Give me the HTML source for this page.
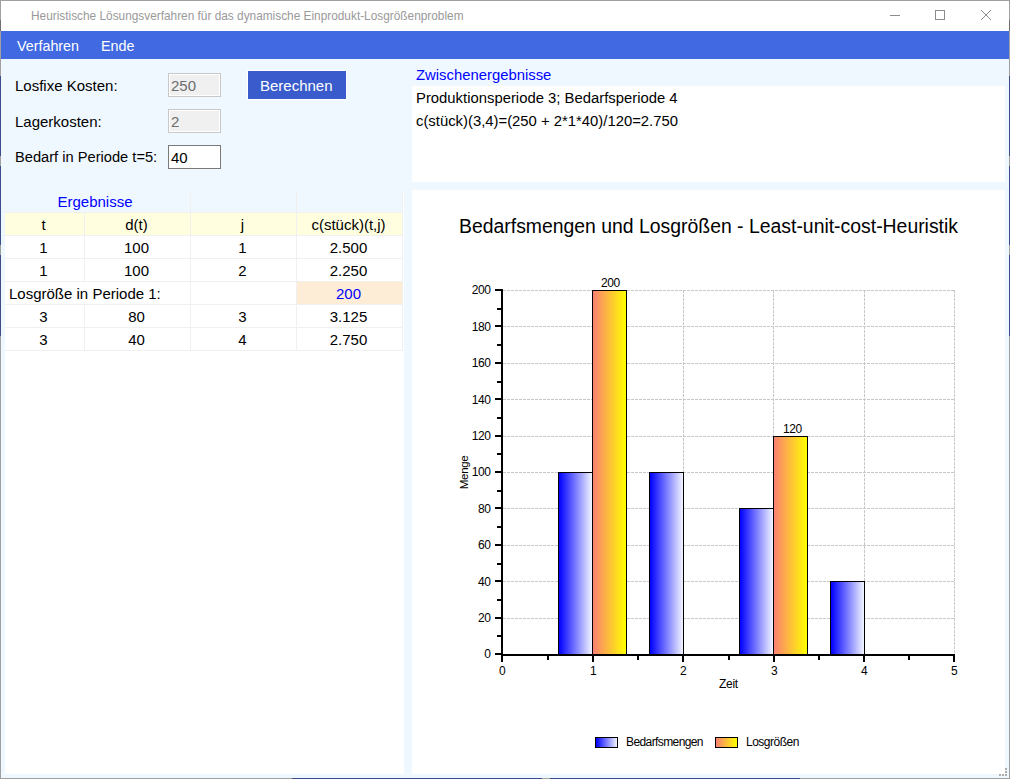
<!DOCTYPE html>
<html><head><meta charset="utf-8">
<style>
html,body{margin:0;padding:0;}
body{width:1010px;height:779px;position:relative;overflow:hidden;background:#F0F8FF;font-family:"Liberation Sans",sans-serif;}
.a{position:absolute;}
.t{position:absolute;white-space:pre;line-height:1;}
.lbl{font-size:15px;color:#000;}
.tb{position:absolute;box-sizing:border-box;background:#F0F0F0;border:1px solid #C9C9C9;box-shadow:inset 0 0 0 1px #fff;width:53px;height:24px;}
.c{position:absolute;white-space:pre;line-height:1;font-size:15px;text-align:center;}
</style></head><body>

<div class="a" style="left:0;top:0;width:1010px;height:1px;background:#A0A0A0"></div>
<div class="a" style="left:0;top:778px;width:1010px;height:1px;background:#A0A0A0"></div>
<div class="a" style="left:292px;top:778px;width:250px;height:1px;background:#3D4C8C"></div>
<div class="a" style="left:550px;top:778px;width:250px;height:1px;background:#3D4C8C"></div>
<div class="a" style="left:0px;top:0;width:1px;height:779px;background:#A0A0A0"></div>
<div class="a" style="left:0px;top:20px;width:1px;height:11px;background:#707070"></div>
<div class="a" style="left:0px;top:76px;width:1px;height:80px;background:#3D4C8C"></div>
<div class="a" style="left:0px;top:166px;width:1px;height:79px;background:#3D4C8C"></div>
<div class="a" style="left:0px;top:255px;width:1px;height:81px;background:#3D4C8C"></div>
<div class="a" style="left:1009px;top:0;width:1px;height:779px;background:#A0A0A0"></div>
<div class="a" style="left:1009px;top:20px;width:1px;height:11px;background:#707070"></div>
<div class="a" style="left:1009px;top:76px;width:1px;height:80px;background:#3D4C8C"></div>
<div class="a" style="left:1009px;top:166px;width:1px;height:79px;background:#3D4C8C"></div>
<div class="a" style="left:1009px;top:255px;width:1px;height:81px;background:#3D4C8C"></div>
<div class="a" style="left:1px;top:1px;width:1008px;height:30px;background:#fff"></div>
<div class="t" style="left:31px;top:11px;font-size:11.85px;color:#999999">Heuristische Lösungsverfahren für das dynamische Einprodukt-Losgrößenproblem</div>
<div class="a" style="left:890px;top:15px;width:10px;height:1px;background:#8C8C8C"></div>
<div class="a" style="left:935px;top:10px;width:8px;height:8px;border:1px solid #8C8C8C"></div>
<svg class="a" style="left:980px;top:9px" width="12" height="12" viewBox="0 0 12 12"><path d="M1 1 L11 11 M11 1 L1 11" stroke="#8C8C8C" stroke-width="1" fill="none"/></svg>
<div class="a" style="left:1px;top:31px;width:1008px;height:28px;background:#4169E1"></div>
<div class="t" style="left:17px;top:39px;font-size:14.3px;color:#fff">Verfahren</div>
<div class="t" style="left:101px;top:39px;font-size:14.3px;color:#fff">Ende</div>
<div class="t lbl" style="left:15px;top:78px">Losfixe Kosten:</div>
<div class="t lbl" style="left:15px;top:114px">Lagerkosten:</div>
<div class="t lbl" style="left:15px;top:150px;font-size:14.67px">Bedarf in Periode t=5:</div>
<div class="tb" style="left:168px;top:73px"></div>
<div class="tb" style="left:168px;top:109px"></div>
<div class="tb" style="left:168px;top:145px;background:#fff;border-color:#7A7A7A;box-shadow:none"></div>
<div class="t lbl" style="left:171px;top:78px;color:#6D6D6D">250</div>
<div class="t lbl" style="left:171px;top:114px;color:#6D6D6D">2</div>
<div class="t lbl" style="left:171px;top:150px">40</div>
<div class="a" style="left:247px;top:70px;width:98px;height:28px;background:#3A5BCB;border:1px solid #fff"></div>
<div class="t lbl" style="left:260px;top:78px;color:#fff">Berechnen</div>
<div class="t lbl" style="left:416px;top:68px;color:#0000FF;font-size:14.85px">Zwischenergebnisse</div>
<div class="a" style="left:412px;top:86px;width:593px;height:96px;background:#fff"></div>
<div class="t lbl" style="left:416px;top:91px;font-size:14.85px">Produktionsperiode 3; Bedarfsperiode 4</div>
<div class="t lbl" style="left:416px;top:114px;font-size:14.85px">c(stück)(3,4)=(250 + 2*1*40)/120=2.750</div>
<div class="a" style="left:5px;top:190px;width:399px;height:584px;background:#fff"></div>
<div class="a" style="left:5px;top:190px;width:397px;height:22px;background:#F0F8FF"></div>
<div class="a" style="left:5px;top:212px;width:398px;height:1px;background:#F0F0F0"></div>
<div class="a" style="left:5px;top:213px;width:397px;height:22px;background:#FFFFE0"></div>
<div class="a" style="left:5px;top:235px;width:398px;height:1px;background:#F0F0F0"></div>
<div class="a" style="left:5px;top:236px;width:397px;height:22px;background:#fff"></div>
<div class="a" style="left:5px;top:258px;width:398px;height:1px;background:#F0F0F0"></div>
<div class="a" style="left:5px;top:259px;width:397px;height:22px;background:#fff"></div>
<div class="a" style="left:5px;top:281px;width:398px;height:1px;background:#F0F0F0"></div>
<div class="a" style="left:5px;top:282px;width:397px;height:22px;background:#fff"></div>
<div class="a" style="left:5px;top:304px;width:398px;height:1px;background:#F0F0F0"></div>
<div class="a" style="left:5px;top:305px;width:397px;height:22px;background:#fff"></div>
<div class="a" style="left:5px;top:327px;width:398px;height:1px;background:#F0F0F0"></div>
<div class="a" style="left:5px;top:328px;width:397px;height:22px;background:#fff"></div>
<div class="a" style="left:5px;top:350px;width:398px;height:1px;background:#F0F0F0"></div>
<div class="a" style="left:297px;top:282px;width:105px;height:22px;background:#FEEDD6"></div>
<div class="a" style="left:190px;top:190px;width:1px;height:161px;background:#F0F0F0"></div>
<div class="a" style="left:296px;top:190px;width:1px;height:161px;background:#F0F0F0"></div>
<div class="a" style="left:402px;top:190px;width:1px;height:161px;background:#F0F0F0"></div>
<div class="a" style="left:84px;top:213px;width:1px;height:23px;background:#F0F0F0"></div>
<div class="a" style="left:84px;top:236px;width:1px;height:23px;background:#F0F0F0"></div>
<div class="a" style="left:84px;top:259px;width:1px;height:23px;background:#F0F0F0"></div>
<div class="a" style="left:84px;top:305px;width:1px;height:23px;background:#F0F0F0"></div>
<div class="a" style="left:84px;top:328px;width:1px;height:23px;background:#F0F0F0"></div>
<div class="c" style="left:3px;top:194px;width:184px;color:#0000FF">Ergebnisse</div>
<div class="c" style="left:4px;top:217px;width:79px;color:#000">t</div>
<div class="c" style="left:84px;top:217px;width:105px;color:#000">d(t)</div>
<div class="c" style="left:190px;top:217px;width:105px;color:#000">j</div>
<div class="c" style="left:296px;top:217px;width:105px;color:#000">c(stück)(t,j)</div>
<div class="c" style="left:4px;top:240px;width:79px;color:#000">1</div>
<div class="c" style="left:84px;top:240px;width:105px;color:#000">100</div>
<div class="c" style="left:190px;top:240px;width:105px;color:#000">1</div>
<div class="c" style="left:296px;top:240px;width:105px;color:#000">2.500</div>
<div class="c" style="left:4px;top:263px;width:79px;color:#000">1</div>
<div class="c" style="left:84px;top:263px;width:105px;color:#000">100</div>
<div class="c" style="left:190px;top:263px;width:105px;color:#000">2</div>
<div class="c" style="left:296px;top:263px;width:105px;color:#000">2.250</div>
<div class="t lbl" style="left:9px;top:286px;color:#000">Losgröße in Periode 1:</div>
<div class="c" style="left:296px;top:286px;width:105px;color:#0000FF">200</div>
<div class="c" style="left:4px;top:309px;width:79px;color:#000">3</div>
<div class="c" style="left:84px;top:309px;width:105px;color:#000">80</div>
<div class="c" style="left:190px;top:309px;width:105px;color:#000">3</div>
<div class="c" style="left:296px;top:309px;width:105px;color:#000">3.125</div>
<div class="c" style="left:4px;top:332px;width:79px;color:#000">3</div>
<div class="c" style="left:84px;top:332px;width:105px;color:#000">40</div>
<div class="c" style="left:190px;top:332px;width:105px;color:#000">4</div>
<div class="c" style="left:296px;top:332px;width:105px;color:#000">2.750</div>
<div class="a" style="left:412px;top:190px;width:593px;height:584px;background:#fff"></div>
<div class="t" style="left:459px;top:217px;font-size:19.4px;color:#000">Bedarfsmengen und Losgrößen - Least-unit-cost-Heuristik</div>
<svg class="a" style="left:0;top:0" width="1010" height="779" viewBox="0 0 1010 779" shape-rendering="crispEdges"><defs><linearGradient id="gb" x1="0" y1="0" x2="1" y2="0"><stop offset="0" stop-color="#0000FF"/><stop offset="1" stop-color="#F2F5FF"/></linearGradient><linearGradient id="go" x1="0" y1="0" x2="1" y2="0"><stop offset="0" stop-color="#FA8072"/><stop offset="1" stop-color="#FFFF00"/></linearGradient></defs><line x1="503" y1="618.5" x2="955" y2="618.5" stroke="#C8C8C8" stroke-width="1" stroke-dasharray="3 1"/><line x1="503" y1="581.5" x2="955" y2="581.5" stroke="#C8C8C8" stroke-width="1" stroke-dasharray="3 1"/><line x1="503" y1="545.5" x2="955" y2="545.5" stroke="#C8C8C8" stroke-width="1" stroke-dasharray="3 1"/><line x1="503" y1="508.5" x2="955" y2="508.5" stroke="#C8C8C8" stroke-width="1" stroke-dasharray="3 1"/><line x1="503" y1="472.5" x2="955" y2="472.5" stroke="#C8C8C8" stroke-width="1" stroke-dasharray="3 1"/><line x1="503" y1="436.5" x2="955" y2="436.5" stroke="#C8C8C8" stroke-width="1" stroke-dasharray="3 1"/><line x1="503" y1="399.5" x2="955" y2="399.5" stroke="#C8C8C8" stroke-width="1" stroke-dasharray="3 1"/><line x1="503" y1="363.5" x2="955" y2="363.5" stroke="#C8C8C8" stroke-width="1" stroke-dasharray="3 1"/><line x1="503" y1="326.5" x2="955" y2="326.5" stroke="#C8C8C8" stroke-width="1" stroke-dasharray="3 1"/><line x1="503" y1="290.5" x2="955" y2="290.5" stroke="#C8C8C8" stroke-width="1" stroke-dasharray="3 1"/><line x1="592.5" y1="290" x2="592.5" y2="654" stroke="#C8C8C8" stroke-width="1" stroke-dasharray="3 1"/><line x1="683.5" y1="290" x2="683.5" y2="654" stroke="#C8C8C8" stroke-width="1" stroke-dasharray="3 1"/><line x1="773.5" y1="290" x2="773.5" y2="654" stroke="#C8C8C8" stroke-width="1" stroke-dasharray="3 1"/><line x1="864.5" y1="290" x2="864.5" y2="654" stroke="#C8C8C8" stroke-width="1" stroke-dasharray="3 1"/><line x1="954.5" y1="290" x2="954.5" y2="654" stroke="#C8C8C8" stroke-width="1" stroke-dasharray="3 1"/><rect x="558" y="472" width="35" height="182" fill="#000"/><rect x="559" y="473" width="33" height="181" fill="url(#gb)"/><rect x="592" y="290" width="35" height="364" fill="#000"/><rect x="593" y="291" width="33" height="363" fill="url(#go)"/><rect x="649" y="472" width="35" height="182" fill="#000"/><rect x="650" y="473" width="33" height="181" fill="url(#gb)"/><rect x="739" y="508" width="35" height="146" fill="#000"/><rect x="740" y="509" width="33" height="145" fill="url(#gb)"/><rect x="773" y="436" width="35" height="218" fill="#000"/><rect x="774" y="437" width="33" height="217" fill="url(#go)"/><rect x="830" y="581" width="35" height="73" fill="#000"/><rect x="831" y="582" width="33" height="72" fill="url(#gb)"/><rect x="501" y="289" width="2" height="367" fill="#000"/><rect x="501" y="654" width="454" height="2" fill="#000"/><rect x="495" y="653" width="6" height="2" fill="#000"/><rect x="495" y="617" width="6" height="2" fill="#000"/><rect x="495" y="580" width="6" height="2" fill="#000"/><rect x="495" y="544" width="6" height="2" fill="#000"/><rect x="495" y="507" width="6" height="2" fill="#000"/><rect x="495" y="471" width="6" height="2" fill="#000"/><rect x="495" y="435" width="6" height="2" fill="#000"/><rect x="495" y="398" width="6" height="2" fill="#000"/><rect x="495" y="362" width="6" height="2" fill="#000"/><rect x="495" y="325" width="6" height="2" fill="#000"/><rect x="495" y="289" width="6" height="2" fill="#000"/><rect x="497" y="635" width="4" height="2" fill="#000"/><rect x="497" y="599" width="4" height="2" fill="#000"/><rect x="497" y="563" width="4" height="2" fill="#000"/><rect x="497" y="526" width="4" height="2" fill="#000"/><rect x="497" y="490" width="4" height="2" fill="#000"/><rect x="497" y="453" width="4" height="2" fill="#000"/><rect x="497" y="417" width="4" height="2" fill="#000"/><rect x="497" y="381" width="4" height="2" fill="#000"/><rect x="497" y="344" width="4" height="2" fill="#000"/><rect x="497" y="308" width="4" height="2" fill="#000"/><rect x="501" y="656" width="2" height="6" fill="#000"/><rect x="592" y="656" width="2" height="6" fill="#000"/><rect x="682" y="656" width="2" height="6" fill="#000"/><rect x="773" y="656" width="2" height="6" fill="#000"/><rect x="863" y="656" width="2" height="6" fill="#000"/><rect x="953" y="656" width="2" height="6" fill="#000"/><rect x="547" y="656" width="2" height="4" fill="#000"/><rect x="637" y="656" width="2" height="4" fill="#000"/><rect x="728" y="656" width="2" height="4" fill="#000"/><rect x="818" y="656" width="2" height="4" fill="#000"/><rect x="908" y="656" width="2" height="4" fill="#000"/></svg>
<div class="t" style="left:440px;width:50.5px;text-align:right;top:648px;font-size:12px;letter-spacing:-0.45px;">0</div>
<div class="t" style="left:440px;width:50.5px;text-align:right;top:612px;font-size:12px;letter-spacing:-0.45px;">20</div>
<div class="t" style="left:440px;width:50.5px;text-align:right;top:576px;font-size:12px;letter-spacing:-0.45px;">40</div>
<div class="t" style="left:440px;width:50.5px;text-align:right;top:539px;font-size:12px;letter-spacing:-0.45px;">60</div>
<div class="t" style="left:440px;width:50.5px;text-align:right;top:503px;font-size:12px;letter-spacing:-0.45px;">80</div>
<div class="t" style="left:440px;width:50.5px;text-align:right;top:466px;font-size:12px;letter-spacing:-0.45px;">100</div>
<div class="t" style="left:440px;width:50.5px;text-align:right;top:430px;font-size:12px;letter-spacing:-0.45px;">120</div>
<div class="t" style="left:440px;width:50.5px;text-align:right;top:394px;font-size:12px;letter-spacing:-0.45px;">140</div>
<div class="t" style="left:440px;width:50.5px;text-align:right;top:357px;font-size:12px;letter-spacing:-0.45px;">160</div>
<div class="t" style="left:440px;width:50.5px;text-align:right;top:321px;font-size:12px;letter-spacing:-0.45px;">180</div>
<div class="t" style="left:440px;width:50.5px;text-align:right;top:284px;font-size:12px;letter-spacing:-0.45px;">200</div>
<div class="t" style="left:481px;width:42px;text-align:center;top:665px;font-size:12px;letter-spacing:-0.45px;">0</div>
<div class="t" style="left:572px;width:42px;text-align:center;top:665px;font-size:12px;letter-spacing:-0.45px;">1</div>
<div class="t" style="left:662px;width:42px;text-align:center;top:665px;font-size:12px;letter-spacing:-0.45px;">2</div>
<div class="t" style="left:753px;width:42px;text-align:center;top:665px;font-size:12px;letter-spacing:-0.45px;">3</div>
<div class="t" style="left:843px;width:42px;text-align:center;top:665px;font-size:12px;letter-spacing:-0.45px;">4</div>
<div class="t" style="left:933px;width:42px;text-align:center;top:665px;font-size:12px;letter-spacing:-0.45px;">5</div>
<div class="t" style="left:601px;top:277px;font-size:12px;letter-spacing:-0.45px;">200</div>
<div class="t" style="left:783px;top:423px;font-size:12px;letter-spacing:-0.45px;">120</div>
<div class="t" style="left:719px;top:678px;font-size:12px;letter-spacing:-0.3px">Zeit</div>
<div class="t" style="left:448px;top:467px;width:33px;text-align:center;font-size:11.5px;letter-spacing:-0.3px;transform:rotate(-90deg);transform-origin:center">Menge</div>
<div class="a" style="left:595px;top:737px;width:21px;height:9px;border:1px solid #000;background:linear-gradient(to right,#0000FF,#F2F5FF)"></div>
<div class="a" style="left:715px;top:737px;width:21px;height:9px;border:1px solid #000;background:linear-gradient(to right,#FA8072,#FFFF00)"></div>
<div class="t" style="left:626px;top:736px;font-size:12px;letter-spacing:-0.6px">Bedarfsmengen</div>
<div class="t" style="left:746px;top:736px;font-size:12px;letter-spacing:-0.5px">Losgrößen</div>
<div class="a" style="left:1005px;top:768px;width:2px;height:2px;background:#ADADAD"></div>
<div class="a" style="left:1005px;top:771px;width:2px;height:2px;background:#ADADAD"></div>
<div class="a" style="left:999px;top:774px;width:2px;height:2px;background:#ADADAD"></div>
<div class="a" style="left:1002px;top:774px;width:2px;height:2px;background:#ADADAD"></div>
<div class="a" style="left:1005px;top:774px;width:2px;height:2px;background:#ADADAD"></div>
</body></html>
